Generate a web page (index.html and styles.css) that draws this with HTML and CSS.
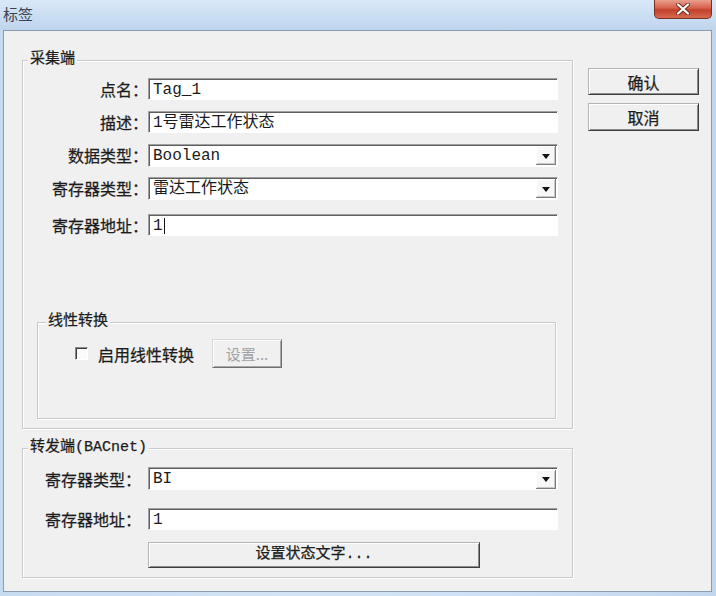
FILE: index.html
```html
<!DOCTYPE html>
<html lang="zh-CN">
<head>
<meta charset="utf-8">
<title>标签</title>
<link rel="stylesheet" href="styles.css">
</head>
<body>
<div class="window">
  <div class="titlebar">
    <span class="title">标签</span>
    <div class="close">
      <svg width="14" height="12" viewBox="0 0 14 12">
        <path d="M2 1.5 L12 10.5 M12 1.5 L2 10.5" stroke="#6b2a22" stroke-width="4" stroke-linecap="round"/>
        <path d="M2 1.5 L12 10.5 M12 1.5 L2 10.5" stroke="#ffffff" stroke-width="2.2" stroke-linecap="round"/>
      </svg>
    </div>
  </div>
  <div class="client">
    <div class="main">
      <div class="group g-collect">
        <div class="gtitle">采集端</div>
        <div class="rows">
          <div class="row"><span class="lbl">点名：</span><div class="field"><span class="val">Tag_1</span></div></div>
          <div class="row"><span class="lbl">描述：</span><div class="field"><span class="val">1号雷达工作状态</span></div></div>
          <div class="row"><span class="lbl">数据类型：</span><div class="field combo"><span class="val">Boolean</span><span class="drop"><span class="arrow"></span></span></div></div>
          <div class="row"><span class="lbl">寄存器类型：</span><div class="field combo"><span class="val">雷达工作状态</span><span class="drop"><span class="arrow"></span></span></div></div>
          <div class="row row-addr"><span class="lbl">寄存器地址：</span><div class="field"><span class="val">1</span><span class="caret"></span></div></div>
        </div>
        <div class="group g-linear">
          <div class="gtitle gtitle-lin">线性转换</div>
          <div class="lin-row">
            <span class="check"></span>
            <span class="check-lbl">启用线性转换</span>
            <div class="btn btn-disabled">设置...</div>
          </div>
        </div>
      </div>
      <div class="group g-forward">
        <div class="gtitle">转发端(BACnet)</div>
        <div class="row row-f1"><span class="lbl lbl-f">寄存器类型：</span><div class="field combo"><span class="val">BI</span><span class="drop"><span class="arrow"></span></span></div></div>
        <div class="row row-f2"><span class="lbl lbl-f">寄存器地址：</span><div class="field"><span class="val">1</span></div></div>
        <div class="btn btn-status">设置状态文字...</div>
      </div>
    </div>
    <div class="side">
      <div class="btn btn-ok">确认</div>
      <div class="btn btn-cancel">取消</div>
    </div>
  </div>
</div>
</body>
</html>
```
FILE: styles.css
```css
html, body {
  margin: 0;
  padding: 0;
}
body {
  width: 716px;
  height: 596px;
  overflow: hidden;
  background: #c4d8ee;
  font-family: "Noto Sans CJK SC", sans-serif;
  color: #1c1c1c;
}
.window {
  width: 716px;
  height: 596px;
  background: linear-gradient(to right, #c7dbf0 0%, #d3e4f6 40%, #cfe1f5 70%, #c2d7ee 100%);
}
.titlebar {
  height: 30px;
  display: flex;
  justify-content: space-between;
  align-items: flex-start;
  background: linear-gradient(to bottom, #d9e8f8 0%, #cadef3 55%, #bfd5ed 100%);
}
.title {
  margin: 5px 0 0 3px;
  font-size: 15px;
  line-height: 18px;
  color: #3a4350;
}
.close {
  width: 58px;
  height: 19px;
  margin-right: 4px;
  box-sizing: border-box;
  border: 1px solid #7a2e24;
  border-top: none;
  border-radius: 0 0 5px 5px;
  background: linear-gradient(to bottom, #e9a08f 0%, #d7604a 45%, #c3402c 55%, #d66a4f 100%);
  display: flex;
  align-items: center;
  justify-content: center;
}
.client {
  margin: 0 4px 0 3px;
  height: 562px;
  box-sizing: border-box;
  border: 1px solid #8b9bb0;
  background: #f0f0f0;
  display: flex;
  align-items: flex-start;
}
.main {
  margin: 29px 0 0 18px;
}
.group {
  box-sizing: border-box;
  border: 1px solid #c9c9c9;
  box-shadow: inset 1px 1px 0 #ffffff, 1px 1px 0 #ffffff;
}
.gtitle {
  width: max-content;
  height: 18px;
  margin: -10px 0 0 5px;
  padding: 0 2px;
  background: #f0f0f0;
  font-family: "Liberation Mono", "Noto Sans CJK SC", monospace;
  font-size: 15px;
  line-height: 18px;
  color: #1c1c1c;
  -webkit-text-stroke: 0.25px #1c1c1c;
}
.g-collect {
  width: 551px;
  height: 369px;
}
.rows {
  margin-top: 9px;
  display: flex;
  flex-direction: column;
  gap: 11px;
}
.row {
  display: flex;
  align-items: center;
  height: 22px;
}
.row-addr {
  margin-top: 4px;
}
.lbl {
  width: 125px;
  text-align: right;
  font-size: 16px;
  line-height: 20px;
  white-space: nowrap;
  -webkit-text-stroke: 0.25px #1c1c1c;
}
.field {
  width: 410px;
  height: 22px;
  box-sizing: border-box;
  display: flex;
  align-items: center;
  background: #ffffff;
  border: 1px solid;
  border-color: #a0a0a0 #ffffff #ffffff #a0a0a0;
  box-shadow: inset 1px 1px 0 #5e5e5e;
  padding-left: 4px;
  padding-top: 1px;
  font-family: "Liberation Mono", "Noto Sans CJK SC", monospace;
  font-size: 16px;
  color: #1a1a1a;
}
.val {
  white-space: nowrap;
  line-height: 20px;
}
.combo {
  height: 23px;
  padding-right: 1px;
  padding-top: 0;
}
.combo .val {
  flex: 1;
  padding-top: 1px;
}
.drop {
  width: 20px;
  height: 19px;
  margin-top: 1px;
  box-sizing: border-box;
  background: #f7f7f7;
  border-right: 1px solid #7c7c7c;
  border-bottom: 1px solid #7c7c7c;
  box-shadow: inset 1px 1px 0 #ffffff, inset -1px -1px 0 #c8c8c8;
  display: flex;
  align-items: center;
  justify-content: center;
}
.arrow {
  width: 0;
  height: 0;
  border-left: 4px solid transparent;
  border-right: 4px solid transparent;
  border-top: 5px solid #111111;
  margin-top: 2px;
}
.caret {
  width: 1px;
  height: 16px;
  background: #111111;
  margin-left: 1px;
}
.g-linear {
  margin: 86px 0 0 14px;
  width: 519px;
  height: 97px;
}
.gtitle-lin {
  margin-left: 8px;
  font-size: 15px;
}
.lin-row {
  margin-top: 8px;
  height: 29px;
  display: flex;
  align-items: center;
}
.check {
  width: 13px;
  height: 13px;
  margin-left: 37px;
  box-sizing: border-box;
  background: #fbfbfb;
  border: 1px solid;
  border-color: #8a8a8a #ffffff #ffffff #8a8a8a;
  box-shadow: inset 1px 1px 0 #3c3c3c;
}
.check-lbl {
  margin-left: 10px;
  font-size: 16px;
  line-height: 20px;
  -webkit-text-stroke: 0.25px #1c1c1c;
}
.btn {
  box-sizing: border-box;
  background: #f0f0f0;
  border: 1px solid;
  border-color: #b4b4b4 #3f3f3f #3f3f3f #b4b4b4;
  box-shadow: inset 1px 1px 0 #ffffff, inset -1px -1px 0 #8c8c8c;
  display: flex;
  align-items: center;
  justify-content: center;
  font-size: 16px;
  line-height: 20px;
  color: #1c1c1c;
  -webkit-text-stroke: 0.25px #1c1c1c;
}
.btn-disabled {
  margin-left: 18px;
  width: 70px;
  height: 29px;
  color: #a2a2a2;
  font-size: 15px;
  border-color: #d8d8d8 #6f6f6f #6f6f6f #d8d8d8;
  box-shadow: inset 1px 1px 0 #ffffff, inset -1px -1px 0 #a8a8a8;
  -webkit-text-stroke: 0;
}
.g-forward {
  margin-top: 19px;
  width: 551px;
  height: 130px;
}
.row-f1 {
  margin-top: 10px;
  height: 23px;
}
.row-f2 {
  margin-top: 18px;
}
.lbl-f {
  width: 118px;
  margin-right: 7px;
}
.btn-status {
  margin: 12px 0 0 125px;
  width: 332px;
  height: 26px;
  font-family: "Liberation Mono", "Noto Sans CJK SC", monospace;
  font-size: 15px;
}
.side {
  margin: 37px 0 0 15px;
  display: flex;
  flex-direction: column;
  gap: 8px;
}
.btn-ok {
  width: 111px;
  height: 27px;
}
.btn-cancel {
  width: 111px;
  height: 28px;
}
```
